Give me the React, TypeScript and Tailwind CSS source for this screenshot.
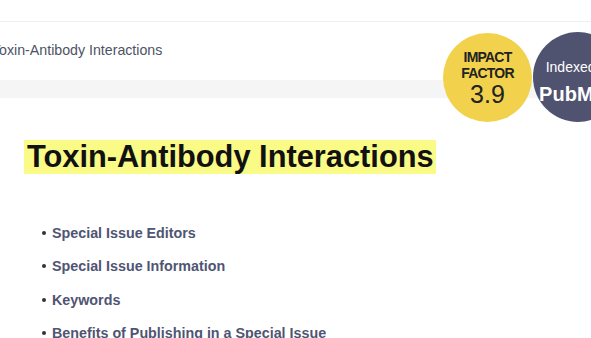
import React from 'react';

const items = [
  'Special Issue Editors',
  'Special Issue Information',
  'Keywords',
  'Benefits of Publishing in a Special Issue',
];

const App = () => {
  return (
    <div className="relative w-[591px] h-[338px] overflow-hidden bg-white font-['Liberation_Sans',Arial,sans-serif]">
      {/* Top strip */}
      <div className="h-[22px] border-b border-[#efefef] bg-white"></div>

      {/* Breadcrumb bar */}
      <div className="h-[58px] flex items-center">
        <span className="ml-[-8px] text-[14.2px] text-[#4d5365]">Toxin-Antibody Interactions</span>
      </div>
      <div className="h-[18px] bg-[#f5f5f5]"></div>

      {/* Badges */}
      <div className="absolute left-[443px] top-[33px] w-[89px] h-[89px] rounded-full bg-[#f2d24c] flex flex-col items-center pt-[16px] text-[#222]">
        <span className="text-[14px] leading-[16px] font-semibold tracking-[-0.8px]">IMPACT</span>
        <span className="text-[14px] leading-[16px] font-semibold tracking-[-0.8px]">FACTOR</span>
        <span className="text-[25px] leading-[26px]">3.9</span>
      </div>
      <div className="absolute left-[533px] top-[32px] w-[90px] h-[90px] rounded-full bg-[#50536f] flex flex-col items-center pt-[26px] text-white">
        <span className="text-[14px] leading-[18px]">Indexed in</span>
        <span className="mt-[6px] text-[20px] leading-[24px] font-bold">PubMed</span>
      </div>

      {/* Content */}
      <div className="pl-[24px] pt-[42px]">
        <h1 className="inline-block bg-[#fafa87] pl-[3px] pr-[2px] text-[30.8px] leading-[34px] font-bold text-[#111]">
          Toxin-Antibody Interactions
        </h1>
        <ul className="mt-[49.5px] pl-[18px] flex flex-col gap-[15.5px]">
          {items.map((it) => (
            <li key={it} className="flex items-center gap-[6px] text-[14.3px] leading-[18px] font-bold text-[#4f5572]">
              <span className="w-[4px] h-[4px] rounded-full bg-[#333]"></span>
              <span>{it}</span>
            </li>
          ))}
        </ul>
      </div>
    </div>
  );
};

export default App;
